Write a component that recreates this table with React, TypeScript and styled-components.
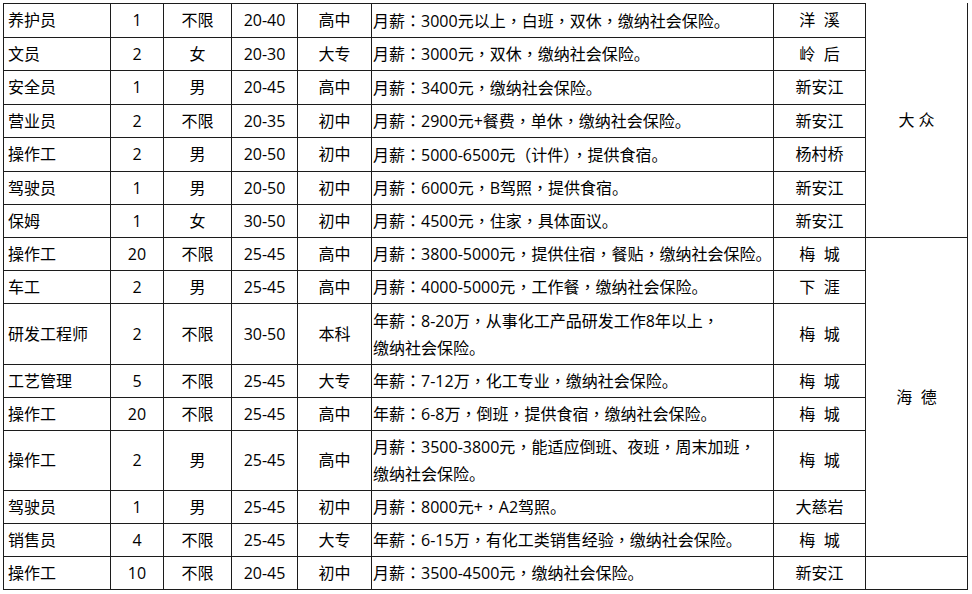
import React from "react"
import styled, { createGlobalStyle } from "styled-components"

const GlobalStyle = createGlobalStyle`
  html, body {
    margin: 0;
    padding: 0;
    background: #ffffff;
  }
  body {
    font-family: "Open Sans", "Noto Sans CJK SC", sans-serif;
    color: #000000;
  }
`

const LINE = "#1c1c1c"

const Page = styled.div`
  padding: 3px 0 0 3px;
`

const Sheet = styled.div`
  display: grid;
  grid-template-columns: 108px 53px 68px 66px 74px 402px 92px 102px;
  grid-template-rows: 35px 33px 34px 33px 34px 33px 33px 33px 33px 61px 33px 33px 60px 33px 33px 33px;
  width: 965px;
`

type Align = "left" | "center"

const Cell = styled.div<{ $align?: Align; $top?: boolean; $first?: boolean }>`
  box-sizing: border-box;
  display: flex;
  align-items: center;
  justify-content: ${(p) => (p.$align === "left" ? "flex-start" : "center")};
  padding: 0 0 0 ${(p) => (p.$first ? "4px" : p.$align === "left" ? "1px" : "0")};
  border-right: 1px solid ${LINE};
  border-bottom: 1px solid ${LINE};
  border-left: ${(p) => (p.$first ? `1px solid ${LINE}` : "none")};
  border-top: ${(p) => (p.$top ? `1px solid ${LINE}` : "none")};
  font-size: 16px;
  line-height: 27px;
  white-space: pre;
`

const Company = styled(Cell)<{ $start: number; $span: number }>`
  grid-column: 8;
  grid-row: ${(p) => `${p.$start} / span ${p.$span}`};
`

const Detail = styled.span`
  display: block;
`

// full-width colon and comma sit in the middle of their box in the original
const Punct = styled.span`
  font-family: "Noto Sans CJK TC", "Noto Sans CJK SC", sans-serif;
`

type Job = {
  post: string
  count: string
  sex: string
  age: string
  edu: string
  detail: string[]
  place: string
}

const jobs: Job[] = [
  { post: "养护员", count: "1", sex: "不限", age: "20-40", edu: "高中", detail: ["月薪：3000元以上，白班，双休，缴纳社会保险。"], place: "洋  溪" },
  { post: "文员", count: "2", sex: "女", age: "20-30", edu: "大专", detail: ["月薪：3000元，双休，缴纳社会保险。"], place: "岭  后" },
  { post: "安全员", count: "1", sex: "男", age: "20-45", edu: "高中", detail: ["月薪：3400元，缴纳社会保险。"], place: "新安江" },
  { post: "营业员", count: "2", sex: "不限", age: "20-35", edu: "初中", detail: ["月薪：2900元+餐费，单休，缴纳社会保险。"], place: "新安江" },
  { post: "操作工", count: "2", sex: "男", age: "20-50", edu: "初中", detail: ["月薪：5000-6500元（计件），提供食宿。"], place: "杨村桥" },
  { post: "驾驶员", count: "1", sex: "男", age: "20-50", edu: "初中", detail: ["月薪：6000元，B驾照，提供食宿。"], place: "新安江" },
  { post: "保姆", count: "1", sex: "女", age: "30-50", edu: "初中", detail: ["月薪：4500元，住家，具体面议。"], place: "新安江" },
  { post: "操作工", count: "20", sex: "不限", age: "25-45", edu: "高中", detail: ["月薪：3800-5000元，提供住宿，餐贴，缴纳社会保险。"], place: "梅  城" },
  { post: "车工", count: "2", sex: "男", age: "25-45", edu: "高中", detail: ["月薪：4000-5000元，工作餐，缴纳社会保险。"], place: "下  涯" },
  { post: "研发工程师", count: "2", sex: "不限", age: "30-50", edu: "本科", detail: ["年薪：8-20万，从事化工产品研发工作8年以上，", "缴纳社会保险。"], place: "梅  城" },
  { post: "工艺管理", count: "5", sex: "不限", age: "25-45", edu: "大专", detail: ["年薪：7-12万，化工专业，缴纳社会保险。"], place: "梅  城" },
  { post: "操作工", count: "20", sex: "不限", age: "25-45", edu: "高中", detail: ["年薪：6-8万，倒班，提供食宿，缴纳社会保险。"], place: "梅  城" },
  { post: "操作工", count: "2", sex: "男", age: "25-45", edu: "高中", detail: ["月薪：3500-3800元，能适应倒班、夜班，周末加班，", "缴纳社会保险。"], place: "梅  城" },
  { post: "驾驶员", count: "1", sex: "男", age: "25-45", edu: "初中", detail: ["月薪：8000元+，A2驾照。"], place: "大慈岩" },
  { post: "销售员", count: "4", sex: "不限", age: "25-45", edu: "大专", detail: ["年薪：6-15万，有化工类销售经验，缴纳社会保险。"], place: "梅  城" },
  { post: "操作工", count: "10", sex: "不限", age: "20-45", edu: "初中", detail: ["月薪：3500-4500元，缴纳社会保险。"], place: "新安江" },
]

const withPunct = (text: string) =>
  text.split(/([：，])/).map((part, i) =>
    part === "：" || part === "，" ? <Punct key={i}>{part}</Punct> : part
  )

const App = () => {
  return (
    <Page>
      <GlobalStyle />
      <Sheet>
        {jobs.map((job, i) => {
          const top = i === 0
          return (
            <React.Fragment key={i}>
              <Cell $align="left" $first $top={top}>{job.post}</Cell>
              <Cell $top={top}>{job.count}</Cell>
              <Cell $top={top}>{job.sex}</Cell>
              <Cell $top={top}>{job.age}</Cell>
              <Cell $top={top}>{job.edu}</Cell>
              <Cell $align="left" $top={top}>
                <div>
                  {job.detail.map((line) => (
                    <Detail key={line}>{withPunct(line)}</Detail>
                  ))}
                </div>
              </Cell>
              <Cell $top={top}>{job.place}</Cell>
            </React.Fragment>
          )
        })}
        <Company $start={1} $span={7}>大 众</Company>
        <Company $start={8} $span={8}>海  德</Company>
        <Company $start={16} $span={1} />
      </Sheet>
    </Page>
  )
}

export default App
